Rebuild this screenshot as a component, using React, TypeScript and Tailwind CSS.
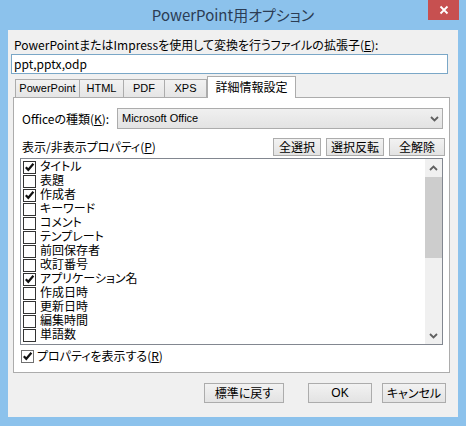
import React from "react";

const items: [string, boolean][] = [
  ["タイトル", true],
  ["表題", false],
  ["作成者", true],
  ["キーワード", false],
  ["コメント", false],
  ["テンプレート", false],
  ["前回保存者", false],
  ["改訂番号", false],
  ["アプリケーション名", true],
  ["作成日時", false],
  ["更新日時", false],
  ["編集時間", false],
  ["単語数", false],
];

function Check({ checked, border = "border-[#333333]" }: { checked: boolean; border?: string }) {
  return (
    <span className={`w-[13px] h-[13px] border ${border} bg-white flex items-center justify-center shrink-0`}>
      {checked && (
        <svg width="11" height="11" viewBox="0 0 11 11">
          <path d="M1.8 5.2 L4.3 7.8 L9.4 1.8" stroke="#111" strokeWidth="2.2" fill="none" />
        </svg>
      )}
    </span>
  );
}

function Chevron({ up }: { up?: boolean }) {
  return (
    <svg width="9" height="6" viewBox="0 0 9 6">
      <path d={up ? "M1 5 L4.5 1.5 L8 5" : "M1 1 L4.5 4.5 L8 1"} stroke="#606060" strokeWidth="1.8" fill="none" />
    </svg>
  );
}

function Btn({ children, className }: { children: React.ReactNode; className: string }) {
  return (
    <div
      className={`border border-[#acacac] bg-linear-to-b from-[#f2f2f2] to-[#e3e3e3] flex items-center justify-center text-[12px] text-black ${className}`}
    >
      {children}
    </div>
  );
}

export default function App() {
  return (
    <div className="w-[466px] h-[426px] bg-[#8cc2ec] flex flex-col overflow-hidden font-['Noto_Sans_CJK_JP',sans-serif] [font-feature-settings:'palt'] text-black">
      {/* title bar */}
      <div className="relative h-[30px] shrink-0 flex items-center justify-center">
        <span className="text-[15px] text-[#2b3c54] leading-[20px]">PowerPoint用オプション</span>
        <div className="absolute top-0 right-[7px] w-[31px] h-[20px] bg-[#c75050] flex items-center justify-center">
          <svg width="10" height="10" viewBox="0 0 10 10">
            <path d="M1.5 1.5 L8.5 8.5 M8.5 1.5 L1.5 8.5" stroke="#fff" strokeWidth="1.8" />
          </svg>
        </div>
      </div>

      {/* client area */}
      <div className="mx-[8px] h-[387px] shrink-0 bg-[#f0f0f0] flex flex-col">
        <div className="mt-[8px] ml-[6px] h-[14px] leading-[14px] text-[12px] whitespace-nowrap">
          PowerPointまたはImpressを使用して変換を行うファイルの拡張子(<u>E</u>):
        </div>
        <div className="mt-[2px] ml-[3px] w-[437px] h-[20px] border border-[#7aa7c7] bg-white pl-[2px] text-[12px] leading-[18px]">
          ppt,pptx,odp
        </div>

        {/* tabs */}
        <div className="mt-[2px] ml-[5px] w-[437px] flex flex-col">
          <div className="h-[21px] flex items-end pl-[2px] font-['Liberation_Sans','Noto_Sans_CJK_JP',sans-serif] text-[11px]">
            <div className="w-[65px] h-[18px] border border-b-0 border-[#acacac] bg-linear-to-b from-[#f2f2f2] to-[#e5e5e5] flex items-center justify-center">
              PowerPoint
            </div>
            <div className="-ml-px w-[45px] h-[18px] border border-b-0 border-[#acacac] bg-linear-to-b from-[#f2f2f2] to-[#e5e5e5] flex items-center justify-center">
              HTML
            </div>
            <div className="-ml-px w-[42px] h-[18px] border border-b-0 border-[#acacac] bg-linear-to-b from-[#f2f2f2] to-[#e5e5e5] flex items-center justify-center">
              PDF
            </div>
            <div className="-ml-px w-[43px] h-[18px] border border-b-0 border-[#acacac] bg-linear-to-b from-[#f2f2f2] to-[#e5e5e5] flex items-center justify-center">
              XPS
            </div>
            <div className="relative z-10 -mb-px w-[89px] h-[22px] border border-b-0 border-[#acacac] bg-white flex items-center justify-center text-[12px] pb-[2px] font-['Noto_Sans_CJK_JP',sans-serif]">
              詳細情報設定
            </div>
          </div>

          {/* panel */}
          <div className="h-[276px] border border-[#acacac] bg-white flex flex-col text-[12px]">
            <div className="mt-[10px] h-[21px] flex items-center pl-[8px]">
              <span className="w-[95px] leading-[14px] whitespace-nowrap">
                Officeの種類(<u>K</u>):
              </span>
              <div className="w-[326px] h-[21px] border border-[#acacac] bg-linear-to-b from-[#f0f0f0] to-[#e3e3e3] flex items-center justify-between pl-[4px] pr-[3px] font-['Liberation_Sans',sans-serif] text-[11px]">
                <span>Microsoft Office</span>
                <Chevron />
              </div>
            </div>

            <div className="mt-[9px] h-[18px] flex items-center pl-[8px]">
              <span className="w-[251px] leading-[14px] whitespace-nowrap">
                表示/非表示プロパティ(<u>P</u>)
              </span>
              <Btn className="w-[48px] h-[18px]">全選択</Btn>
              <Btn className="ml-[5px] w-[58px] h-[18px]">選択反転</Btn>
              <Btn className="ml-[5px] w-[56px] h-[18px]">全解除</Btn>
            </div>

            <div className="mt-[2px] ml-[6px] w-[423px] h-[187px] border border-[#828790] bg-white flex">
              <div className="flex-1 flex flex-col pt-[1px] font-['Liberation_Sans','Noto_Sans_CJK_JP',sans-serif]">
                {items.map(([label, checked]) => (
                  <div key={label} className="h-[14px] flex items-center pl-[2px] gap-[4px] leading-[14px] overflow-hidden">
                    <Check checked={checked} />
                    <span className="leading-[14px]">{label}</span>
                  </div>
                ))}
              </div>
              <div className="w-[17px] bg-[#f0f0f0] flex flex-col">
                <div className="h-[17px] flex items-center justify-center">
                  <Chevron up />
                </div>
                <div className="mt-[1px] h-[81px] bg-[#cdcdcd]" />
                <div className="flex-1" />
                <div className="h-[17px] flex items-center justify-center">
                  <Chevron />
                </div>
              </div>
            </div>

            <div className="mt-[4px] h-[14px] flex items-center pl-[7px] gap-[3px] leading-[14px]">
              <Check checked border="border-[#707070]" />
              <span>
                プロパティを表示する(<u>R</u>)
              </span>
            </div>
          </div>
        </div>

        {/* bottom buttons */}
        <div className="mt-[10px] h-[20px] flex justify-end pr-[12px]">
          <Btn className="w-[80px] h-[20px]">標準に戻す</Btn>
          <Btn className="ml-[24px] w-[64px] h-[20px] font-['Liberation_Sans',sans-serif] text-[11px]">OK</Btn>
          <Btn className="ml-[10px] w-[64px] h-[20px]">キャンセル</Btn>
        </div>
      </div>
    </div>
  );
}
